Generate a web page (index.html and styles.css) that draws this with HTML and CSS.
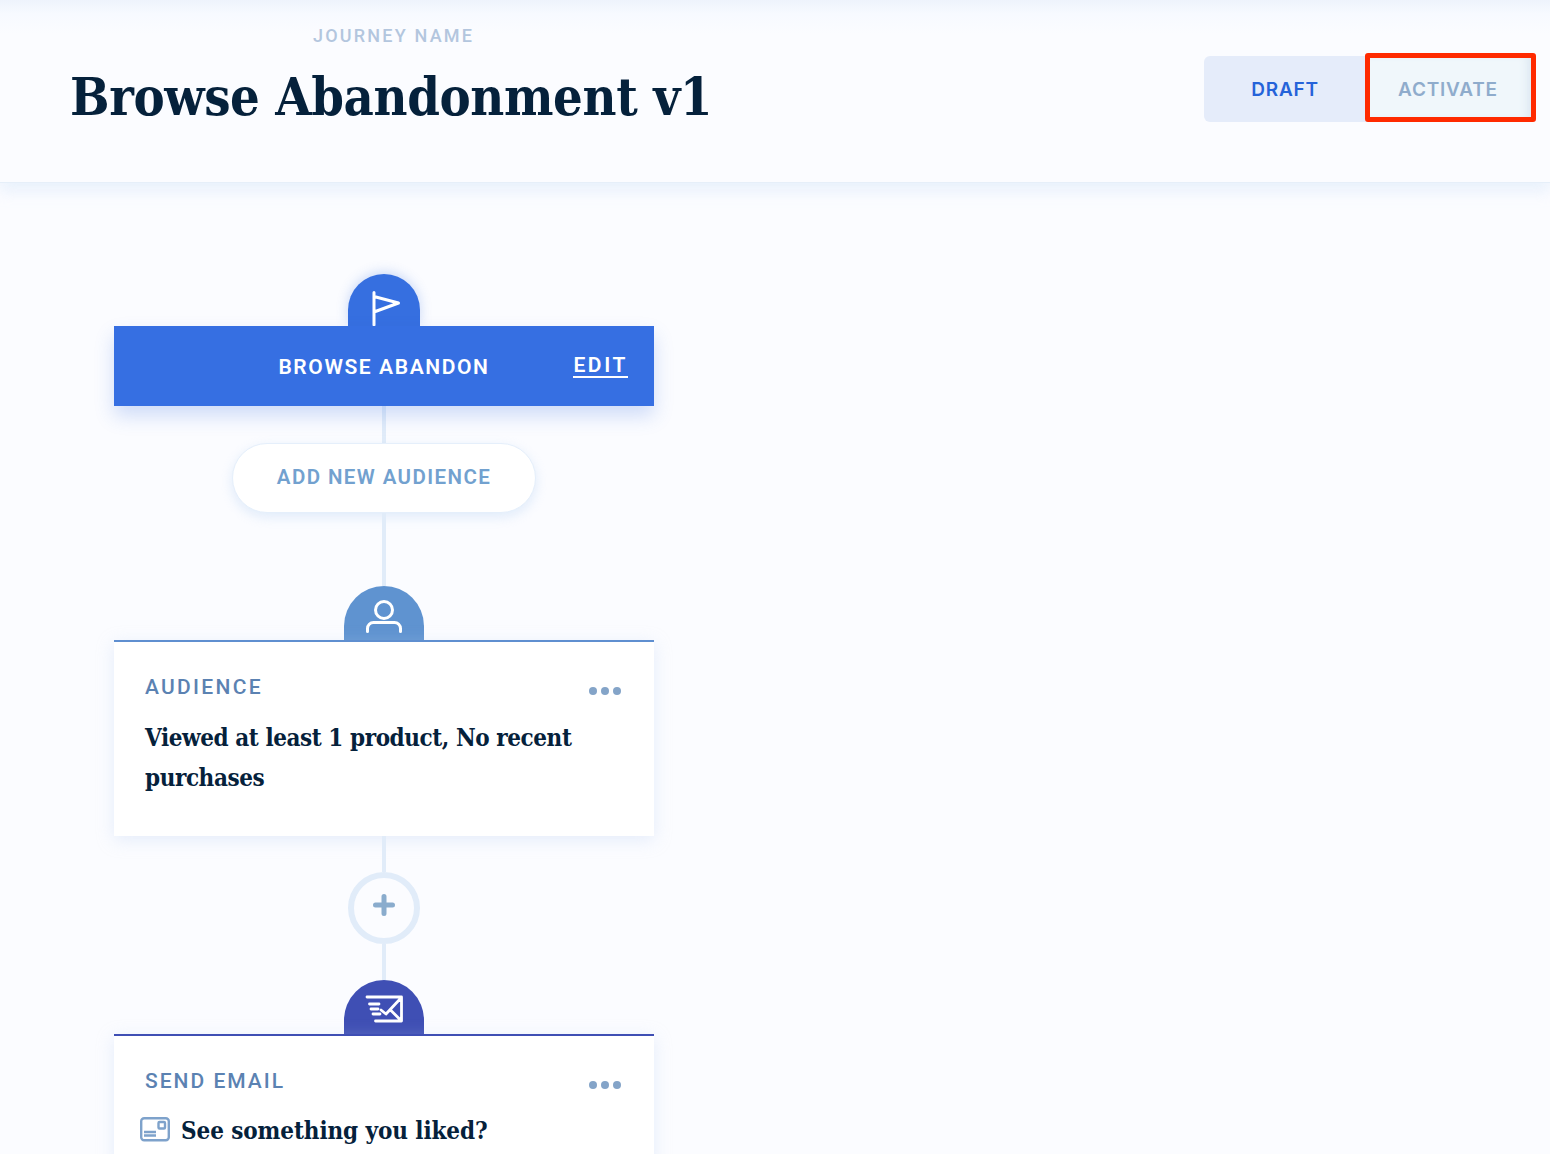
FILE: index.html
```html
<!DOCTYPE html>
<html lang="en">
<head>
<meta charset="utf-8">
<title>Browse Abandonment v1</title>
<link rel="stylesheet" href="styles.css">
</head>
<body>
<div class="page">
  <header class="header">
    <div class="journey">
      <div class="journey-label">JOURNEY NAME</div>
      <h1 class="journey-title">Browse Abandonment v1</h1>
    </div>
    <div class="status">
      <button class="status-btn status-draft">DRAFT</button>
      <button class="status-btn status-activate">ACTIVATE</button>
    </div>
  </header>
  <main class="flow">
    <div class="cap cap-flag">
      <svg class="cap-icon" width="32" height="36" viewBox="0 0 32 36" fill="none" stroke="#fff" stroke-width="3" stroke-linecap="round" stroke-linejoin="round"><path d="M4 1.500V34M4 5.500L28.500 12 4 21"/></svg>
    </div>
    <div class="trigger">
      <span class="trigger-title">BROWSE ABANDON</span>
      <a class="trigger-edit">EDIT</a>
    </div>
    <div class="line line-a"></div>
    <button class="pill">ADD NEW AUDIENCE</button>
    <div class="line line-b"></div>
    <div class="cap cap-audience">
      <svg width="40" height="36" viewBox="0 0 40 36" fill="none" stroke="#fff" stroke-width="3" stroke-linecap="round"><circle cx="20" cy="11" r="8.500"/><path d="M3.500 32.500v-3a6 6 0 0 1 6-6h21a6 6 0 0 1 6 6v3"/></svg>
    </div>
    <section class="card card-audience">
      <div class="card-head">
        <span class="card-label">AUDIENCE</span>
        <span class="dots"><i></i><i></i><i></i></span>
      </div>
      <p class="card-text">Viewed at least 1 product, No recent purchases</p>
    </section>
    <div class="line line-c"></div>
    <button class="plus" aria-label="Add step">
      <svg width="22" height="22" viewBox="0 0 22 22" fill="none" stroke="#8aaccd" stroke-width="5" stroke-linecap="round"><path d="M11 2.500v17M2.500 11h17"/></svg>
    </button>
    <div class="line line-d"></div>
    <div class="cap cap-email">
      <svg width="38" height="30" viewBox="0 0 38 30" fill="none" stroke="#fff" stroke-width="2.800" stroke-linecap="round" stroke-linejoin="round"><path d="M2 2H36.500V26H10.500M4.500 9H14M6 14H13M8 19H15M16 15L21 19 35.500 3.500M25.500 15L35.500 25"/></svg>
    </div>
    <section class="card card-email">
      <div class="card-head">
        <span class="card-label card-label-email">SEND EMAIL</span>
        <span class="dots"><i></i><i></i><i></i></span>
      </div>
      <div class="email-subject">
        <svg width="30" height="25" viewBox="0 0 30 25" fill="none" stroke="#7ea2cb" stroke-width="2.400"><rect x="1.200" y="1.200" width="27.600" height="22.100" rx="3"/><rect x="18.500" y="5" width="6.500" height="6.500" rx="1"/><path d="M4 15h12M4 18.500h12"/></svg>
        <span class="card-text card-text-subject">See something you liked?</span>
      </div>
    </section>
  </main>
</div>
</body>
</html>
```
FILE: styles.css
```css
* { box-sizing: border-box; }
html, body { margin: 0; padding: 0; }
body { background: #fbfcff; font-family: "Inter", "Roboto", sans-serif; }
.page { height: 1154px; overflow: hidden; }

.header {
  height: 183px;
  display: flex;
  justify-content: space-between;
  background: linear-gradient(#eef3fc 0, #f7faff 14px, #fbfcff 34px);
  border-bottom: 1px solid #e6eff9;
  box-shadow: 0 8px 14px rgba(205, 224, 248, .4);
  padding: 0 14px 0 70px;
}
.journey { width: 638px; display: flex; flex-direction: column; align-items: flex-start; padding-top: 26px; }
.journey-label {
  font: 500 18px/20px "Roboto", sans-serif;
  letter-spacing: 2.200px;
  color: #b3c6de;
  margin-left: 243px;
}
.journey-title {
  margin: 21px 0 0;
  font: 700 52px/60px "DejaVu Serif Condensed", "DejaVu Serif", serif;
  letter-spacing: -.38px;
  color: #05213b;
  white-space: nowrap;
}
.status { display: flex; align-items: flex-start; padding-top: 53px; }
.status-btn {
  font: 600 19px/24px "Inter", sans-serif;
  letter-spacing: .8px;
  border: 0;
  padding: 0;
}
.status-draft {
  width: 166px;
  height: 66px;
  margin-top: 3px;
  margin-right: -5px;
  padding-top: 1px;
  padding-right: 4px;
  background: #e5ecfa;
  border-radius: 6px 0 0 6px;
  color: #2563d9;
}
.status-activate {
  position: relative;
  width: 171px;
  height: 69px;
  padding: 4px 5px 0 0;
  background: #f0f7fb;
  border: 5px solid #ff2a00;
  border-radius: 3px;
  box-shadow: inset -8px 0 8px -4px #dde8f2;
  color: #8faccc;
  font-weight: 600;
}

.flow { width: 540px; margin-left: 114px; padding-top: 91px; display: flex; flex-direction: column; align-items: center; }
.cap {
  display: flex;
  justify-content: center;
  flex: none;
}
.cap-flag {
  width: 72px;
  height: 52px;
  padding-top: 17px;
  background: #366fe0;
  border-radius: 36px 36px 0 0;
  box-shadow: 0 -2px 12px rgba(54, 111, 224, .25);
  position: relative;
}
.cap-flag svg { margin-left: 4px; }
.cap-audience, .cap-email {
  width: 80px;
  height: 54px;
  border-radius: 40px 40px 0 0;
}
.cap-audience { background: #5f93d0; padding-top: 13px; }
.cap-email { background: #3f4fb4; padding-top: 15px; }

.trigger {
  position: relative;
  width: 540px;
  height: 80px;
  flex: none;
  background: #366fe2;
  box-shadow: 0 10px 18px rgba(54, 111, 224, .22);
  display: flex;
  align-items: center;
  justify-content: center;
  color: #fff;
}
.trigger-title { font: 600 21px/24px "Roboto", sans-serif; letter-spacing: 1.600px; margin-top: 2px; }
.trigger-edit {
  position: absolute;
  right: 26px;
  top: 28px;
  font: 600 21px/22px "Roboto", sans-serif;
  letter-spacing: 2.600px;
  border-bottom: 2px solid #fff;
}

.line { width: 4px; flex: none; background: #e1ecf9; }
.line-a { height: 37px; }
.line-b { height: 73px; }
.line-c { height: 36px; }
.line-d { height: 36px; }

.pill {
  width: 304px;
  height: 70px;
  flex: none;
  background: #fff;
  border: 1px solid #e5effb;
  border-radius: 35px;
  box-shadow: 0 4px 12px rgba(190, 215, 245, .45);
  font: 600 20.500px/24px "Roboto", sans-serif;
  letter-spacing: 1.400px;
  color: #72a1cf;
  padding: 0 0 2px;
}

.plus {
  width: 72px;
  height: 72px;
  flex: none;
  background: #fbfcff;
  border: 6px solid #e1ecf9;
  border-radius: 50%;
  display: flex;
  align-items: center;
  justify-content: center;
  padding: 0 0 6px;
}

.card {
  width: 540px;
  flex: none;
  background: #fff;
  box-shadow: 0 4px 16px rgba(190, 210, 240, .35);
  padding: 32px 33px 0 31px;
}
.card-audience { height: 196px; border-top: 2px solid #5f8fd0; }
.card-email { height: 130px; border-top: 2px solid #3f4fb4; }
.card-head { height: 26px; display: flex; justify-content: space-between; align-items: flex-start; }
.card-label {
  font: 500 21px/26px "Roboto", sans-serif;
  letter-spacing: 2.300px;
  color: #5b82b2;
}
.card-label-email { letter-spacing: 2px; }
.dots { display: flex; gap: 4px; margin-top: 13px; }
.dots i { width: 8px; height: 8px; border-radius: 50%; background: #84a4c8; display: block; }
.card-text {
  margin: 18px 0 0;
  font: 700 24px/40px "DejaVu Serif Condensed", "DejaVu Serif", serif;
  letter-spacing: -.43px;
  color: #05213b;
}
.card-text-subject { letter-spacing: -.1px; }
.email-subject { display: flex; align-items: flex-start; gap: 11px; margin: 17px 0 0 -5px; }
.email-subject .card-text { margin-top: 0; }
.email-subject svg { margin-top: 6px; flex: none; }
```
